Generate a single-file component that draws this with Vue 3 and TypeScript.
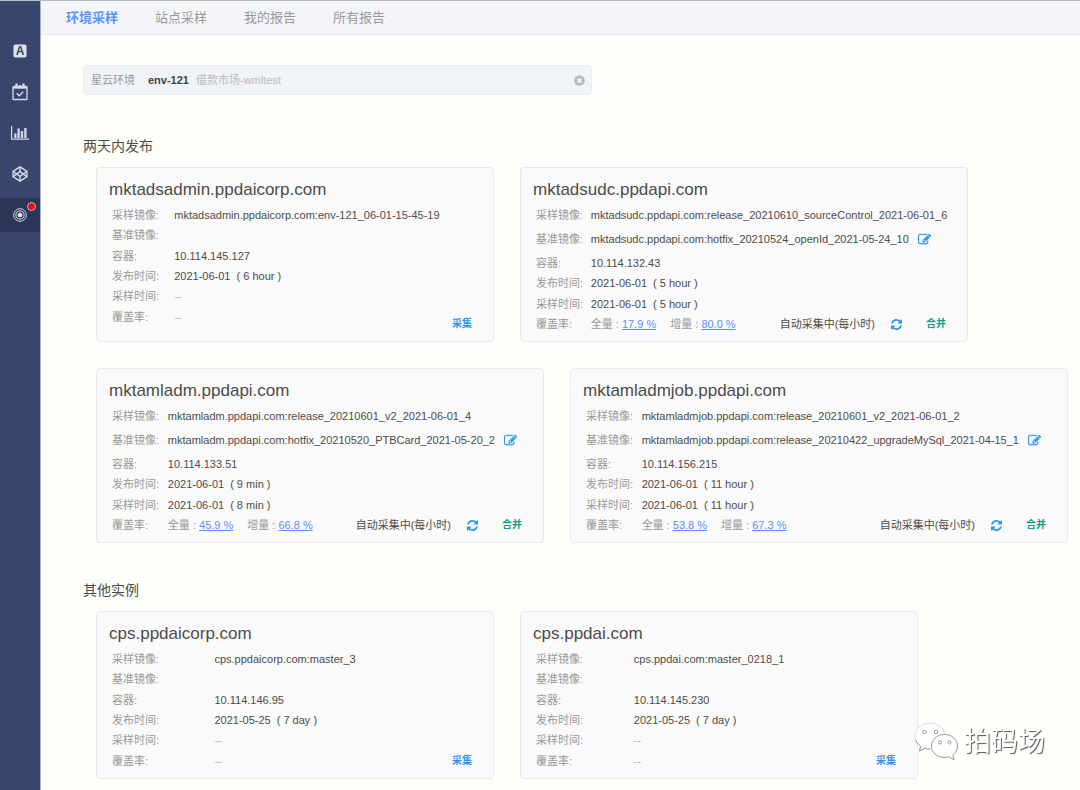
<script setup lang="ts">
import { ref } from 'vue'

interface Instance {
  name: string
  size: 'small' | 'medium' | 'large'
  sampleImage: string
  baseImage?: string
  ip: string
  releaseDate: string
  releaseAge: string
  sampleDate?: string
  sampleAge?: string
  full?: string
  delta?: string
}

interface Group {
  title: string
  items: Instance[]
}

const tabs = ['环境采样', '站点采样', '我的报告', '所有报告']
const activeTab = ref(0)
const env = ref('env-121')

const groups: Group[] = [
  {
    title: '两天内发布',
    items: [
      {
        name: 'mktadsadmin.ppdaicorp.com',
        size: 'small',
        sampleImage: 'mktadsadmin.ppdaicorp.com:env-121_06-01-15-45-19',
        ip: '10.114.145.127',
        releaseDate: '2021-06-01',
        releaseAge: '6 hour',
      },
      {
        name: 'mktadsudc.ppdapi.com',
        size: 'medium',
        sampleImage: 'mktadsudc.ppdapi.com:release_20210610_sourceControl_2021-06-01_6',
        baseImage: 'mktadsudc.ppdapi.com:hotfix_20210524_openId_2021-05-24_10',
        ip: '10.114.132.43',
        releaseDate: '2021-06-01',
        releaseAge: '5 hour',
        sampleDate: '2021-06-01',
        sampleAge: '5 hour',
        full: '17.9 %',
        delta: '80.0 %',
      },
      {
        name: 'mktamladm.ppdapi.com',
        size: 'medium',
        sampleImage: 'mktamladm.ppdapi.com:release_20210601_v2_2021-06-01_4',
        baseImage: 'mktamladm.ppdapi.com:hotfix_20210520_PTBCard_2021-05-20_2',
        ip: '10.114.133.51',
        releaseDate: '2021-06-01',
        releaseAge: '9 min',
        sampleDate: '2021-06-01',
        sampleAge: '8 min',
        full: '45.9 %',
        delta: '66.8 %',
      },
      {
        name: 'mktamladmjob.ppdapi.com',
        size: 'large',
        sampleImage: 'mktamladmjob.ppdapi.com:release_20210601_v2_2021-06-01_2',
        baseImage: 'mktamladmjob.ppdapi.com:release_20210422_upgradeMySql_2021-04-15_1',
        ip: '10.114.156.215',
        releaseDate: '2021-06-01',
        releaseAge: '11 hour',
        sampleDate: '2021-06-01',
        sampleAge: '11 hour',
        full: '53.8 %',
        delta: '67.3 %',
      },
    ],
  },
  {
    title: '其他实例',
    items: [
      {
        name: 'cps.ppdaicorp.com',
        size: 'small',
        sampleImage: 'cps.ppdaicorp.com:master_3',
        ip: '10.114.146.95',
        releaseDate: '2021-05-25',
        releaseAge: '7 day',
      },
      {
        name: 'cps.ppdai.com',
        size: 'small',
        sampleImage: 'cps.ppdai.com:master_0218_1',
        ip: '10.114.145.230',
        releaseDate: '2021-05-25',
        releaseAge: '7 day',
      },
    ],
  },
]
</script>

<template>
  <div class="app">
    <nav class="sidebar" aria-label="主菜单">
      <button class="side-item" type="button" aria-label="应用">
        <svg width="14" height="14" viewBox="0 0 14 14">
          <rect x="0.5" y="0.5" width="13" height="13" rx="2" fill="#dfe3ec" />
          <text x="7" y="11" text-anchor="middle" class="a-mark">A</text>
        </svg>
      </button>
      <button class="side-item" type="button" aria-label="日程">
        <svg width="16" height="18" viewBox="0 0 16 18" fill="none" stroke="#d5dae6">
          <rect x="1" y="3.5" width="14" height="13" rx="0.8" stroke-width="1.4" />
          <path d="M1 4.5h14" stroke-width="2.4" />
          <path d="M4.5 0.500v4M11.500 0.500v4" stroke-width="2.400" />
          <path d="M8 2v2" stroke-width="1.600" />
          <path d="M4.800 10.400l2.400 2.400 4-4.100" stroke-width="1.500" />
        </svg>
      </button>
      <button class="side-item" type="button" aria-label="统计">
        <svg width="18" height="14" viewBox="0 0 18 14" fill="none" stroke="#d5dae6">
          <path d="M0.6 0v13.2H18" stroke-width="1.2" />
          <path d="M4.4 7.5V12M7.6 2.500V12M11 5V12M14.400 2V12" stroke-width="2.300" />
        </svg>
      </button>
      <button class="side-item" type="button" aria-label="组件">
        <svg width="16" height="16" viewBox="0 0 16 16" fill="none" stroke="#d5dae6" stroke-width="1.400" stroke-linejoin="round">
          <path d="M8 0.800l7 4.600v5.200l-7 4.600-7-4.600V5.400z" />
          <path d="M1 5.400l7 5 7-5M1 10.600l7-5 7 5M8 0.800v4.800M8 10.400v4.800" />
        </svg>
      </button>
      <button class="side-item active" type="button" aria-label="采样">
        <svg width="14" height="14" viewBox="0 0 14 14" fill="none" stroke="#d5dae6">
          <circle cx="7" cy="7" r="6.300" />
          <circle cx="7" cy="7" r="4.100" />
          <circle cx="7" cy="7" r="2" fill="#e6e9f0" />
        </svg>
        <span class="badge"></span>
      </button>
    </nav>

    <div class="page">
      <header class="tabs">
        <button
          v-for="(tab, i) in tabs"
          :key="tab"
          type="button"
          class="tab"
          :class="{ current: i === activeTab }"
          @click="activeTab = i"
        >{{ tab }}</button>
      </header>

      <main class="content">
        <div class="search">
          <label for="env">星云环境</label>
          <input id="env" v-model="env" type="text" />
          <span class="hint">借款市场-wmltest</span>
          <button class="clear" type="button" aria-label="清除" @click="env = ''">
            <svg width="11" height="11" viewBox="0 0 11 11">
              <circle cx="5.500" cy="5.500" r="5.300" fill="#b9bbbd" />
              <path d="M3.600 3.600l3.800 3.800M7.400 3.600l-3.800 3.800" stroke="#f4f6f8" stroke-width="1.600" />
            </svg>
          </button>
        </div>

        <section v-for="group in groups" :key="group.title" class="group">
          <h2>{{ group.title }}</h2>
          <div class="cards">
            <article v-for="item in group.items" :key="item.name" class="card" :class="item.size">
              <h3>{{ item.name }}</h3>
              <table :class="{ tall: item.baseImage }">
                <tbody>
                  <tr>
                    <th scope="row">采样镜像:</th>
                    <td>{{ item.sampleImage }}</td>
                  </tr>
                  <tr :class="{ editable: item.baseImage }">
                    <th scope="row">基准镜像:</th>
                    <td>
                      <div v-if="item.baseImage" class="base">
                        <span>{{ item.baseImage }}</span>
                        <button type="button" aria-label="编辑基准镜像">
                          <svg width="13" height="13" viewBox="0 0 1792 1792" fill="currentColor" stroke="currentColor" stroke-width="40">
                            <path d="M888 1184l116-116-152-152-116 116v56h96v96h56zm440-720q-16-16-33 1l-350 350q-17 17-1 33t33-1l350-350q17-17 1-33zm80 594v190q0 119-84.500 203.500t-203.500 84.500h-832q-119 0-203.500-84.500t-84.500-203.500v-832q0-119 84.500-203.500t203.500-84.500h832q63 0 117 25 15 7 18 23 3 17-9 29l-49 49q-14 14-32 8-23-6-45-6h-832q-66 0-113 47t-47 113v832q0 66 47 113t113 47h832q66 0 113-47t47-113v-126q0-13 9-22l64-64q15-15 35-7t20 29zm-96-738l288 288-672 672h-288v-288zm444 132l-92 92-288-288 92-92q28-28 68-28t68 28l152 152q28 28 28 68t-28 68z" />
                          </svg>
                        </button>
                      </div>
                    </td>
                  </tr>
                  <tr>
                    <th scope="row">容器:</th>
                    <td>{{ item.ip }}</td>
                  </tr>
                  <tr>
                    <th scope="row">发布时间:</th>
                    <td>{{ item.releaseDate }}<span class="age">( {{ item.releaseAge }} )</span></td>
                  </tr>
                  <tr>
                    <th scope="row">采样时间:</th>
                    <td v-if="item.sampleDate">{{ item.sampleDate }}<span class="age">( {{ item.sampleAge }} )</span></td>
                    <td v-else class="none">--</td>
                  </tr>
                  <tr>
                    <th scope="row">覆盖率:</th>
                    <td v-if="item.full" class="rate">
                      <span>全量 : <a href="#">{{ item.full }}</a></span>
                      <span>增量 : <a href="#">{{ item.delta }}</a></span>
                    </td>
                    <td v-else class="none">--</td>
                  </tr>
                </tbody>
              </table>
              <div class="actions">
                <template v-if="item.full">
                  <span>自动采集中(每小时)</span>
                  <button class="refresh" type="button" aria-label="刷新">
                    <svg width="11" height="11" viewBox="0 128 1536 1536" fill="currentColor">
                      <path d="M1511 1056q0 5-1 7-64 268-268 434.500t-478 166.500q-146 0-282.500-55t-243.500-157l-129 129q-19 19-45 19t-45-19-19-45v-448q0-26 19-45t45-19h448q26 0 45 19t19 45-19 45l-137 137q71 66 161 102t187 36q134 0 250-65t186-179q11-17 53-117 8-23 30-23h192q13 0 22.500 9.500t9.500 22.500zm25-800v448q0 26-19 45t-45 19h-448q-26 0-45-19t-19-45 19-45l138-138q-148-137-349-137-134 0-250 65t-186 179q-11 17-53 117-8 23-30 23h-199q-13 0-22.500-9.500t-9.500-22.500v-7q65-268 270-434.500t480-166.500q146 0 284 55.500t245 156.500l130-129q19-19 45-19t45 19 19 45z" />
                    </svg>
                  </button>
                  <button class="merge" type="button">合并</button>
                </template>
                <button v-else class="collect" type="button">采集</button>
              </div>
            </article>
          </div>
        </section>
      </main>
    </div>

    <div class="watermark">
      <svg width="44" height="40" viewBox="0 0 44 40">
        <g fill="#fff" stroke="#8d8d8d" stroke-width="0.900">
          <path d="M16 1C7.500 1 1 6.800 1 14.200c0 4.300 2.200 7.800 5.800 10.200L5.300 29l5.400-2.700c1.700.5 3.400.8 5.300.8 8.300 0 15-5.500 15-12.900S24.300 1 16 1z" stroke="#d6d6d6" />
          <path d="M2 18c.8 2.600 2.500 4.800 4.800 6.400L5.300 29l5.400-2.700c1.700.5 3.400.8 5.300.8" />
          <path d="M30.500 12.500c-7.300 0-13 5-13 11.500s5.700 11.500 13 11.500c1.600 0 3.200-.3 4.600-.7l5 3-1.300-4.500c2.900-2.200 4.700-5.500 4.700-9.300 0-6.500-5.700-11.500-13-11.500z" />
        </g>
        <g fill="#fff" stroke="#8d8d8d" stroke-width="0.900">
          <circle cx="10.500" cy="10" r="1.700" />
          <circle cx="22" cy="10" r="1.700" />
          <circle cx="26" cy="20.500" r="1.500" />
          <circle cx="35.500" cy="20.500" r="1.500" />
        </g>
      </svg>
      <span>拍码场</span>
    </div>
  </div>
</template>

<style>
body {
  margin: 0;
  background: #fffffa;
}
</style>

<style scoped>
.app {
  box-sizing: border-box;
  display: flex;
  min-height: 100vh;
  border-top: 1px solid #b3bcbf;
  background: #fffffa;
  color: #4c4c4c;
  font-family: "Liberation Sans", "Noto Sans CJK SC", sans-serif;
  font-size: 11px;
  line-height: 20px;
}

button {
  padding: 0;
  border: 0;
  background: none;
  color: inherit;
  font: inherit;
  cursor: pointer;
}

.sidebar {
  display: flex;
  flex: none;
  flex-direction: column;
  gap: 7px;
  width: 40px;
  padding-top: 33px;
  border-right: 1px solid #a9b1c5;
  background: #38466d;
}

.side-item {
  position: relative;
  display: flex;
  align-items: center;
  justify-content: center;
  height: 34px;
}

.side-item.active {
  background: #2c3758;
}

.a-mark {
  fill: #38466d;
  font-size: 12px;
  font-weight: bold;
}

.badge {
  position: absolute;
  top: 4px;
  right: 4px;
  width: 9px;
  height: 9px;
  border: 1px solid #d9a9b4;
  border-radius: 50%;
  box-sizing: border-box;
  background: #e0101a;
}

.page {
  flex: 1;
  min-width: 0;
}

.tabs {
  display: flex;
  gap: 37px;
  padding: 0 25px;
  border-bottom: 1px solid #ededf1;
  background: #f4f5f9;
}

.tab {
  height: 33px;
  color: #999;
  font-size: 13px;
}

.tab.current {
  color: #5b93fb;
  font-weight: bold;
}

.content {
  padding: 30px 8px 10px 42px;
}

.search {
  box-sizing: border-box;
  display: flex;
  align-items: center;
  max-width: 509px;
  height: 30px;
  padding: 0 6px 0 7px;
  border: 1px solid #ebedf0;
  border-radius: 4px;
  background: #f0f3f7;
  color: #999;
}

.search input {
  width: 48px;
  margin-left: 13px;
  padding: 0;
  border: 0;
  outline: 0;
  background: none;
  color: #444;
  font: inherit;
  font-weight: bold;
}

.hint {
  color: #bbb;
}

.clear {
  display: flex;
  margin-left: auto;
}

.group {
  margin-top: 37px;
}

.search + .group {
  margin-top: 41px;
}

h2 {
  margin: 0 0 11px;
  color: #4c4c4c;
  font-size: 14px;
  font-weight: normal;
  line-height: 20px;
}

.cards {
  display: flex;
  flex-wrap: wrap;
  gap: 26px;
  padding-left: 13px;
}

.card {
  box-sizing: border-box;
  display: grid;
  grid-template-rows: auto 1fr;
  padding: 11px 12px 7px;
  border: 1px solid #e9eaee;
  border-radius: 4px;
  background: #fafafa;
}

.small {
  flex: 0 1 398px;
}

.medium {
  flex: 0 1 448px;
}

.large {
  flex: 0 1 498px;
}

h3 {
  margin: 0 0 4px;
  color: #4c4c4c;
  font-size: 17px;
  font-weight: normal;
  line-height: 22px;
}

table {
  grid-area: 2 / 1;
  align-self: start;
  width: 100%;
  height: 122px;
  border-collapse: collapse;
}

table.tall {
  height: 129px;
}

th,
td {
  height: 20px;
  padding: 0 3px;
  text-align: left;
  white-space: nowrap;
}

th {
  padding-right: 7px;
  color: #999;
  font-weight: normal;
}

td {
  padding-left: 0;
}

.editable > * {
  height: 27px;
}

.base {
  display: flex;
  align-items: center;
  gap: 9px;
}

.base button,
.refresh {
  display: flex;
  color: #2a96f3;
}

.age {
  margin-left: 6px;
}

.none {
  color: #bbb;
}

.rate {
  color: #999;
}

.rate span + span {
  margin-left: 14px;
}

.rate a {
  color: #5b8ff9;
  text-decoration: underline;
}

.actions {
  z-index: 1;
  display: flex;
  grid-area: 2 / 1;
  align-items: center;
  align-self: end;
  justify-self: end;
  margin-right: 9px;
}

.refresh {
  margin: 0 24px 0 16px;
}

.merge,
.collect {
  font-size: 10px;
  font-weight: bold;
}

.merge {
  color: #12a08c;
}

.collect {
  color: #2a96f3;
}

.watermark {
  position: fixed;
  right: 35px;
  bottom: 28px;
  z-index: 2;
  display: flex;
  align-items: center;
  gap: 6px;
  color: #fff;
  font-size: 27px;
  line-height: 40px;
  pointer-events: none;
  text-shadow: 1px 1px 1px #555;
}
</style>
